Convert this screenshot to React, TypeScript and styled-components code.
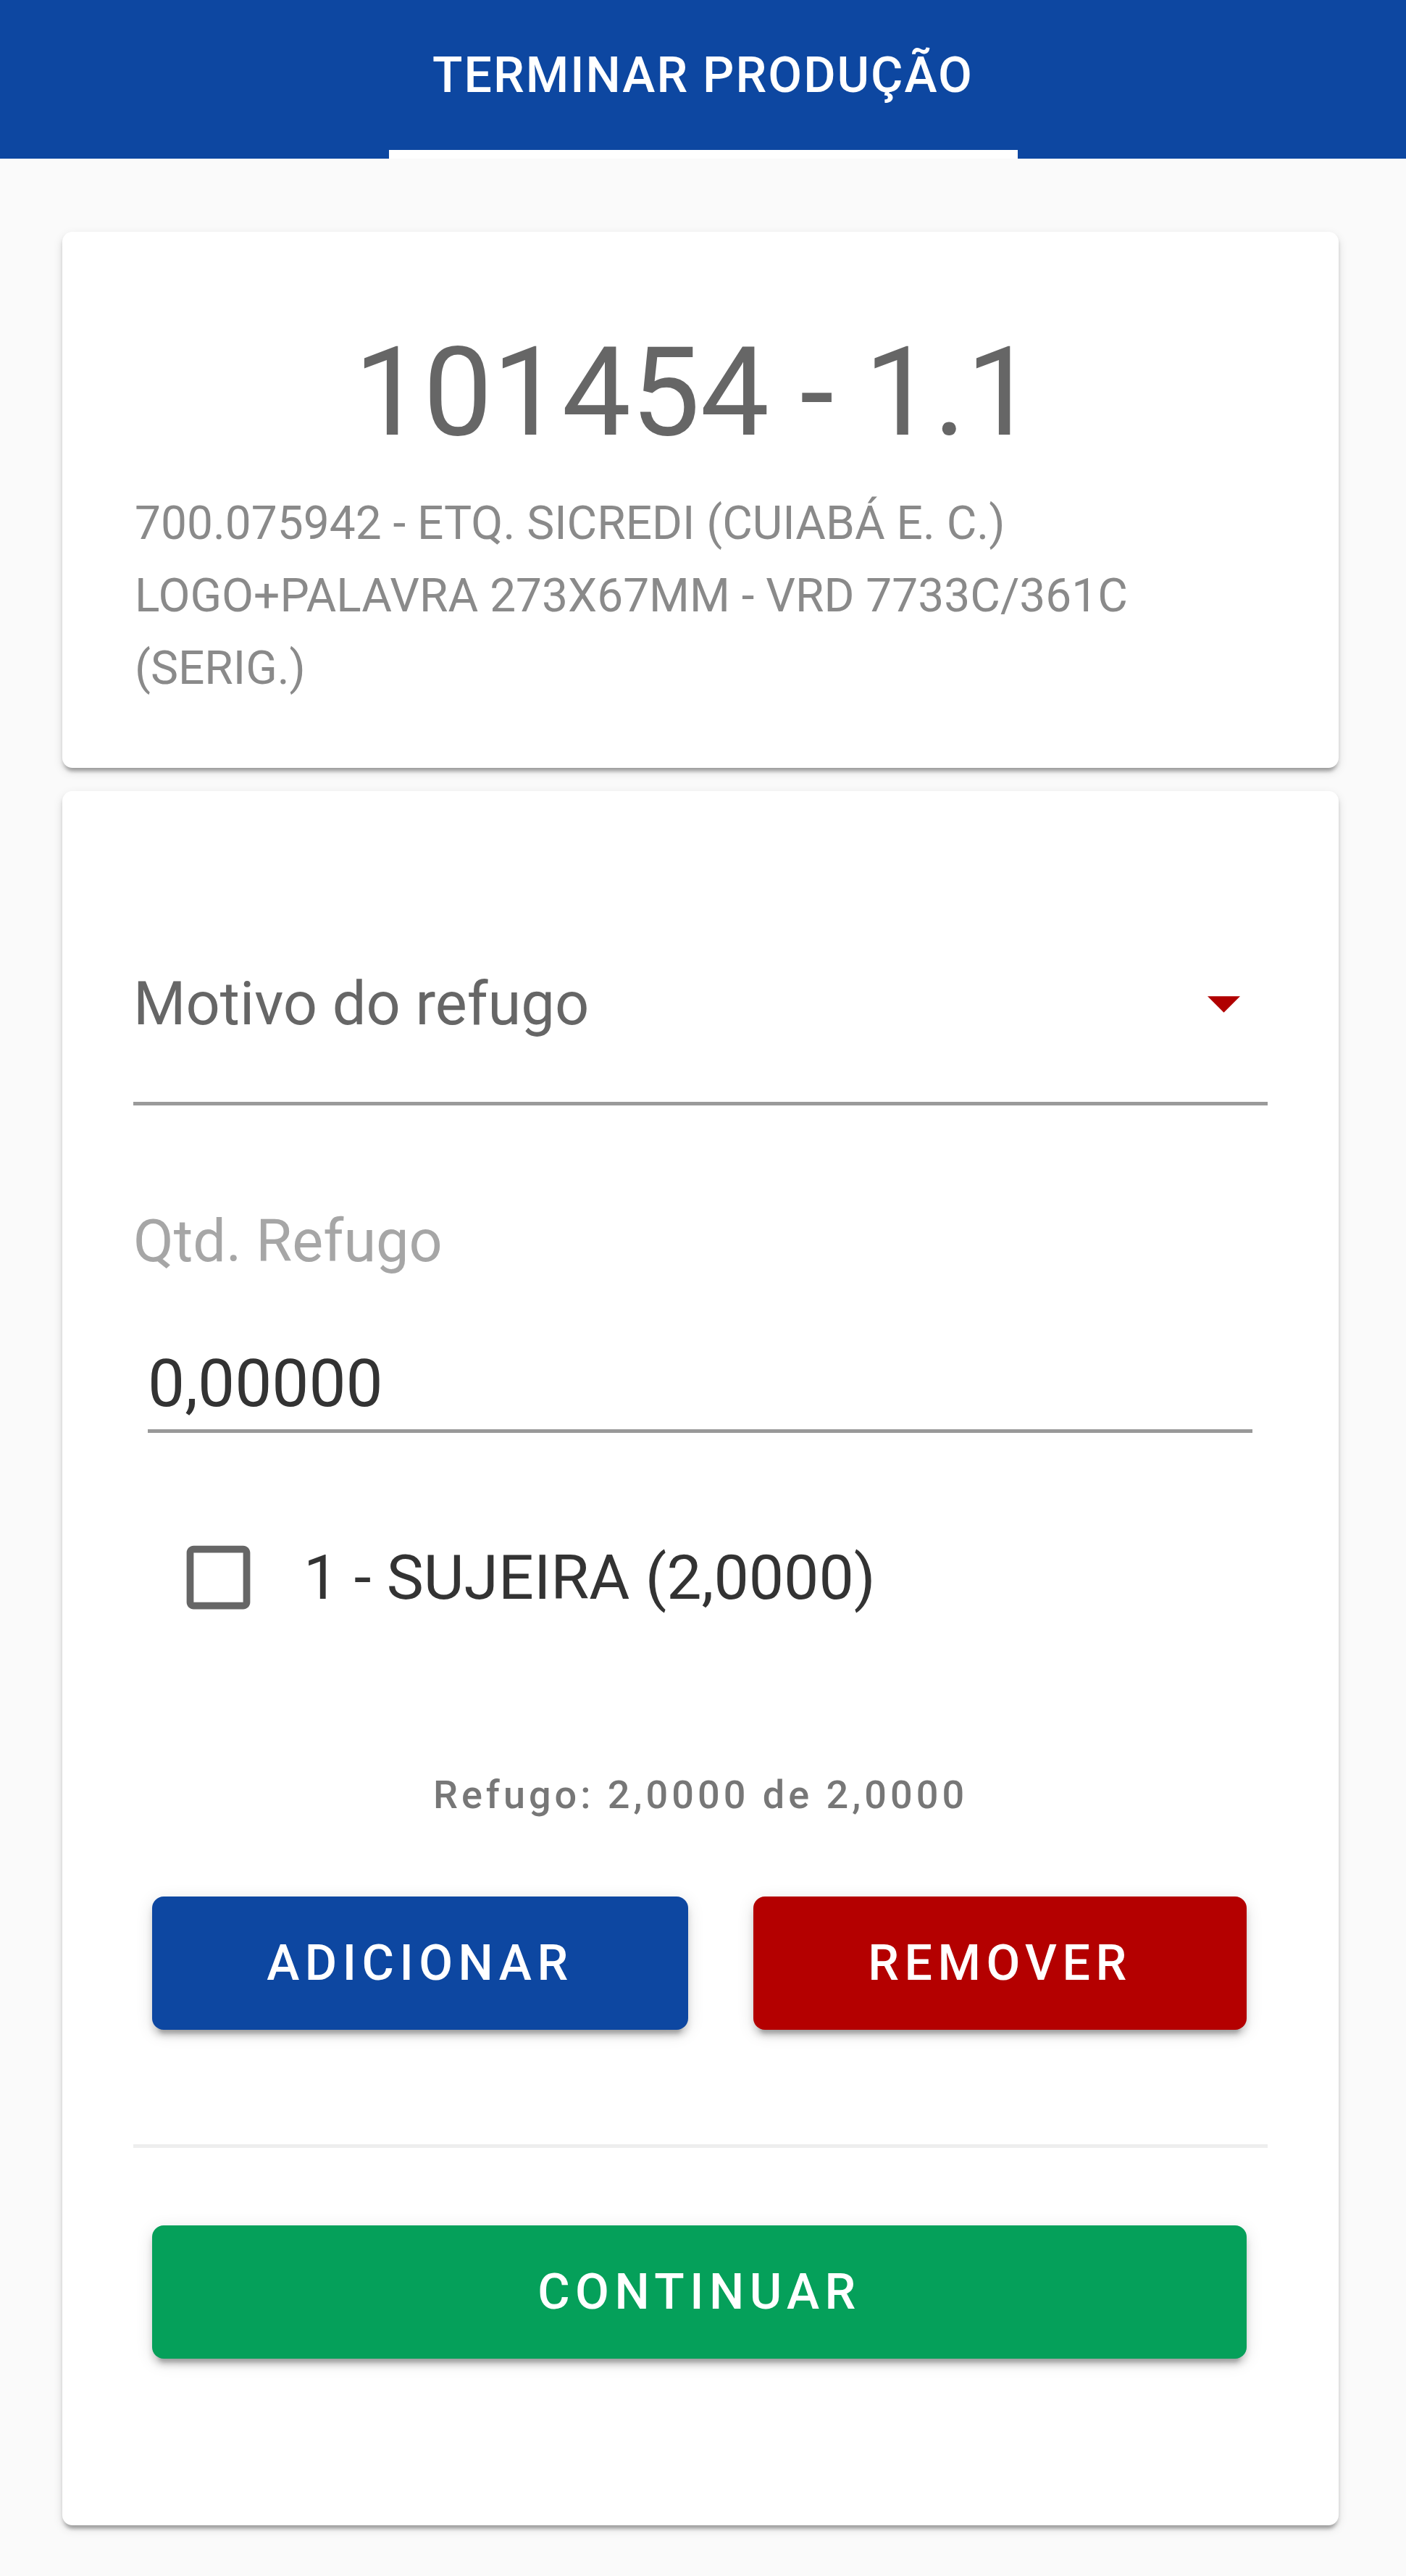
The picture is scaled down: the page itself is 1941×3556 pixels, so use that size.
import styled, { createGlobalStyle } from "styled-components";

const App = () => {
  return (
    <>
      <GlobalStyle />
      <Header>
        <Tab>Terminar produção</Tab>
      </Header>
      <Content>
        <InfoCard>
          <OrderTitle>101454 - 1.1</OrderTitle>
          <Description>
            700.075942 - ETQ. SICREDI (CUIABÁ E. C.) LOGO+PALAVRA 273X67MM - VRD 7733C/361C (SERIG.)
          </Description>
        </InfoCard>
        <FormCard>
          <Select>
            <SelectValue>Motivo do refugo</SelectValue>
            <Arrow viewBox="7 10 10 5">
              <path d="M7 10l5 5 5-5z" />
            </Arrow>
          </Select>
          <FieldLabel>Qtd. Refugo</FieldLabel>
          <QtyInput readOnly value="0,00000" />
          <CheckRow>
            <CheckBox viewBox="0 0 24 24">
              <path d="M19 5v14H5V5h14m0-2H5c-1.11 0-2 .9-2 2v14c0 1.1.89 2 2 2h14c1.1 0 2-.9 2-2V5c0-1.1-.9-2-2-2z" />
            </CheckBox>
            <CheckText>1 - SUJEIRA (2,0000)</CheckText>
          </CheckRow>
          <Summary>Refugo: 2,0000 de 2,0000</Summary>
          <ButtonRow $top={113}>
            <ActionButton $bg="#0d47a1">Adicionar</ActionButton>
            <ActionButton $bg="#b40000">Remover</ActionButton>
          </ButtonRow>
          <Divider />
          <ButtonRow $top={107}>
            <ActionButton $bg="#05a05a">Continuar</ActionButton>
          </ButtonRow>
        </FormCard>
      </Content>
    </>
  );
};

export default App;

const GlobalStyle = createGlobalStyle`
  * {
    box-sizing: border-box;
  }
  body {
    margin: 0;
    background: #fafafa;
    font-family: Roboto, "Noto Sans", "Liberation Sans", sans-serif;
  }
`;

const Header = styled.header`
  height: 219px;
  background: #0d47a1;
  display: flex;
  justify-content: center;
`;

const Tab = styled.div`
  width: 868px;
  height: 219px;
  display: flex;
  align-items: center;
  justify-content: center;
  border-bottom: 12px solid #ffffff;
  color: #ffffff;
  font-size: 68px;
  font-weight: 500;
  letter-spacing: 2px;
  line-height: 1;
  text-transform: uppercase;
`;

const Content = styled.main`
  padding: 101px 93px 71px 86px;
  display: flex;
  flex-direction: column;
  gap: 32px;
`;

const Card = styled.section`
  background: #ffffff;
  border-radius: 14px;
  box-shadow: 0 9px 5px -5px rgba(0, 0, 0, 0.2), 0 5px 5px 0 rgba(0, 0, 0, 0.14),
    0 5px 14px 0 rgba(0, 0, 0, 0.12);
`;

const InfoCard = styled(Card)`
  padding: 137px 100px 87px;
`;

const OrderTitle = styled.h1`
  margin: 0;
  padding-right: 16px;
  text-align: center;
  font-size: 170px;
  font-weight: 400;
  line-height: 1;
  color: #666666;
`;

const Description = styled.p`
  margin: 46px 0 0;
  font-size: 64px;
  line-height: 100px;
  color: #8a8a8a;
`;

const FormCard = styled(Card)`
  padding: 252px 98px 230px;
`;

const Select = styled.div`
  display: flex;
  align-items: center;
  padding-bottom: 93px;
  border-bottom: 5px solid #9a9a9a;
`;

const SelectValue = styled.span`
  flex: 1;
  font-size: 83px;
  line-height: 84px;
  color: #666666;
`;

const Arrow = styled.svg`
  width: 45px;
  height: 25px;
  margin-right: 38px;
  fill: #b00000;
`;

const FieldLabel = styled.label`
  display: block;
  margin-top: 147px;
  font-size: 81px;
  line-height: 82px;
  color: #a6a6a6;
`;

const QtyInput = styled.input`
  display: block;
  width: calc(100% - 41px);
  height: 115px;
  margin: 108px 21px 0 20px;
  padding: 0 0 16px;
  border: none;
  border-bottom: 5px solid #999999;
  outline: none;
  background: transparent;
  font-family: inherit;
  font-size: 91px;
  color: #333333;
`;

const CheckRow = styled.div`
  display: flex;
  align-items: center;
  gap: 59px;
  margin-top: 141px;
  padding-left: 59px;
`;

const CheckBox = styled.svg`
  width: 117px;
  height: 117px;
  fill: #666666;
  flex-shrink: 0;
`;

const CheckText = styled.span`
  font-size: 86px;
  line-height: 1;
  color: #333333;
`;

const Summary = styled.div`
  margin-top: 215px;
  text-align: center;
  font-size: 54px;
  font-weight: 500;
  letter-spacing: 5px;
  line-height: 1;
  color: #777777;
`;

const ButtonRow = styled.div<{ $top: number }>`
  display: flex;
  gap: 90px;
  margin-top: ${(props) => props.$top}px;
  padding: 0 29px 0 26px;
`;

const ActionButton = styled.button<{ $bg: string }>`
  flex: 1 1 auto;
  height: 184px;
  padding: 0 40px;
  border: none;
  border-radius: 16px;
  background: ${(props) => props.$bg};
  color: #ffffff;
  font-family: inherit;
  font-size: 68px;
  font-weight: 500;
  letter-spacing: 7.5px;
  text-transform: uppercase;
  box-shadow: 0 14px 5px -9px rgba(0, 0, 0, 0.2), 0 9px 9px 0 rgba(0, 0, 0, 0.14),
    0 5px 23px 0 rgba(0, 0, 0, 0.12);
  cursor: pointer;
`;

const Divider = styled.hr`
  margin: 158px 0 0;
  height: 5px;
  border: none;
  background: #eeeeee;
`;
